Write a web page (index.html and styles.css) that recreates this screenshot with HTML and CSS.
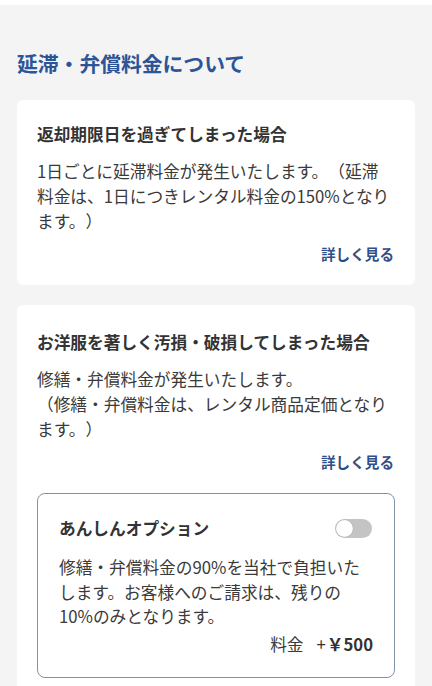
FILE: index.html
```html
<!DOCTYPE html>
<html lang="ja">
<head>
<meta charset="utf-8">
<link rel="stylesheet" href="styles.css">
</head>
<body>
<div class="topbar"></div>
<main class="page">
  <h1 class="heading">延滞・弁償料金について</h1>
  <section class="card">
    <h2 class="card-title">返却期限日を過ぎてしまった場合</h2>
    <p class="card-text">1日ごとに延滞料金が発生いたします。（延滞料金は、1日につきレンタル料金の150%となります。）</p>
    <div class="more-row"><a class="more">詳しく見る</a></div>
  </section>
  <section class="card card-second">
    <h2 class="card-title">お洋服を著しく汚損・破損してしまった場合</h2>
    <p class="card-text">修繕・弁償料金が発生いたします。<br>（修繕・弁償料金は、レンタル商品定価となります。）</p>
    <div class="more-row"><a class="more">詳しく見る</a></div>
    <div class="option">
      <div class="option-head">
        <h3 class="option-title">あんしんオプション</h3>
        <span class="toggle"><span class="knob"></span></span>
      </div>
      <p class="option-text">修繕・弁償料金の90%を当社で負担いたします。お客様へのご請求は、残りの10%のみとなります。</p>
      <div class="price"><span class="price-label">料金</span><span class="price-plus">+</span><span class="price-value">￥500</span></div>
    </div>
  </section>
</main>
</body>
</html>
```
FILE: styles.css
```css
* { box-sizing: border-box; }
html, body {
  margin: 0;
  padding: 0;
}
body {
  background: #f4f4f4;
  font-family: "Noto Sans CJK JP", "Noto Sans", sans-serif;
  color: #333;
  width: 432px;
  height: 686px;
  overflow: hidden;
  text-spacing-trim: space-all;
  line-break: strict;
}
.topbar {
  height: 5px;
  background: #fff;
}
.page {
  padding: 43px 17px 0 17px;
}
.heading {
  margin: 0 0 22px 0;
  font-size: 20.8px;
  line-height: 30px;
  font-weight: 700;
  color: #2d5596;
}
.card {
  background: #fff;
  border-radius: 6px;
  padding: 22px 20px 21px 20px;
  margin-bottom: 20px;
}
.card-second {
  padding-top: 25px;
}
.card-title {
  margin: 0;
  font-size: 16.7px;
  line-height: 24px;
  font-weight: 700;
  color: #333;
}
.card-text {
  margin: 13px 0 0 0;
  font-size: 16.7px;
  line-height: 25px;
  color: #3a3a3a;
}
.more-row {
  display: flex;
  justify-content: flex-end;
  margin-top: 10px;
}
.more {
  font-size: 14.6px;
  line-height: 20px;
  font-weight: 700;
  color: #2e4f88;
  margin-right: 1px;
}
.option {
  margin-top: 21px;
  border: 1.5px solid #8292aa;
  border-radius: 8px;
  padding: 22px 21px 21px 21px;
}
.option-head {
  display: flex;
  align-items: center;
  justify-content: space-between;
}
.option-title {
  margin: 0;
  font-size: 16.7px;
  line-height: 24px;
  font-weight: 700;
  color: #333;
}
.toggle {
  position: relative;
  width: 37px;
  height: 19px;
  border-radius: 10px;
  background: #c4c4c4;
  margin-right: 1px;
}
.knob {
  position: absolute;
  left: 1px;
  top: 1px;
  width: 17px;
  height: 17px;
  border-radius: 50%;
  background: #fff;
  box-shadow: 0 0 1px rgba(0,0,0,0.35);
}
.option-text {
  margin: 15px 0 0 0;
  font-size: 16.7px;
  line-height: 24.5px;
  color: #3a3a3a;
}
.price {
  display: flex;
  justify-content: flex-end;
  align-items: baseline;
  margin-top: 3px;
  font-size: 16.7px;
  line-height: 24px;
}
.price-label { color: #3a3a3a; margin-right: 13px; }
.price-plus { color: #333; margin-right: 1px; }
.price-value { font-weight: 700; color: #333; }
```
